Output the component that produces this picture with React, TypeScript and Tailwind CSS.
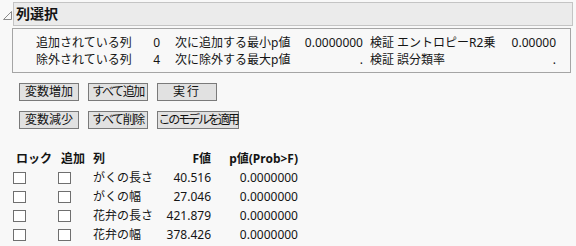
const font = { fontFamily: '"Noto Sans", "Noto Sans CJK JP", sans-serif' };

const rows = [
  { name: 'がくの長さ', f: '40.516', p: '0.0000000' },
  { name: 'がくの幅', f: '27.046', p: '0.0000000' },
  { name: '花弁の長さ', f: '421.879', p: '0.0000000' },
  { name: '花弁の幅', f: '378.426', p: '0.0000000' },
];

const Btn = ({ label, w, track = '' }: { label: string; w: string; track?: string }) => (
  <button
    className={`${w} ${track} h-[18px] bg-[#e1e1e1] border border-[#7a7a7a] text-[12px] leading-[16px] text-[#111] px-0 whitespace-nowrap`}
  >
    {label}
  </button>
);

const Box = () => (
  <div className="w-[13px] h-[12px] border border-[#6f6f6f] bg-white" />
);

const App = () => {
  return (
    <div
      className="w-[576px] h-[246px] bg-[#f8f8f8] text-[#141414] text-[12px] overflow-hidden"
      style={font}
    >
      {/* title bar */}
      <div className="flex items-center pt-[2px]">
        <svg width="9" height="9" viewBox="0 0 9 9" className="ml-[3px] mt-[2px]">
          <polygon points="8.5,0.5 8.5,8.5 0.5,8.5" fill="none" stroke="#8a8a8a" strokeWidth="1" />
        </svg>
        <div className="ml-[1px] w-[560px] h-[24px] bg-[#ebebeb] border border-[#c4c4c4] flex items-center pl-[2px]">
          <span className="text-[14px] font-bold leading-none">列選択</span>
        </div>
      </div>

      {/* summary box */}
      <div className="ml-[12px] mt-[2px] w-[559px] h-[45px] border border-[#a5a5a5] pt-[5px] pl-[23px]">
        <div className="grid grid-cols-[104px_20px_143px_60px_137px_56px] leading-[17px] whitespace-nowrap">
          <span>追加されている列</span>
          <span className="text-right">0</span>
          <span className="pl-[15px]">次に追加する最小p値</span>
          <span className="text-right">0.0000000</span>
          <span className="pl-[7px]">検証 エントロピーR2乗</span>
          <span className="text-right">0.00000</span>

          <span>除外されている列</span>
          <span className="text-right">4</span>
          <span className="pl-[15px]">次に除外する最大p値</span>
          <span className="text-right">.</span>
          <span className="pl-[7px]">検証 誤分類率</span>
          <span className="text-right">.</span>
        </div>
      </div>

      {/* buttons */}
      <div className="ml-[19px] mt-[10px] flex flex-col gap-[10px]">
        <div className="flex gap-[9px]">
          <Btn label="変数増加" w="w-[60px]" />
          <Btn label="すべて追加" w="w-[60px]" track="tracking-[-1.4px]" />
          <Btn label="実行" w="w-[60px]" track="tracking-[2px]" />
        </div>
        <div className="flex gap-[9px]">
          <Btn label="変数減少" w="w-[60px]" />
          <Btn label="すべて削除" w="w-[60px]" track="tracking-[-1.4px]" />
          <Btn label="このモデルを適用" w="w-[82px]" track="tracking-[-2.1px]" />
        </div>
      </div>

      {/* column table */}
      <div className="ml-[13px] mt-[20px] grid grid-cols-[45px_35px_68px_50px_87px] auto-rows-[19px] items-center whitespace-nowrap">
        <span className="font-bold pl-[3px]">ロック</span>
        <span className="font-bold pl-[3px]">追加</span>
        <span className="font-bold">列</span>
        <span className="font-bold text-right">F値</span>
        <span className="font-bold text-right">p値(Prob&gt;F)</span>
        {rows.map((r) => (
          <div key={r.name} className="contents">
            <Box />
            <Box />
            <span>{r.name}</span>
            <span className="text-right">{r.f}</span>
            <span className="text-right">{r.p}</span>
          </div>
        ))}
      </div>
    </div>
  );
};

export default App;
